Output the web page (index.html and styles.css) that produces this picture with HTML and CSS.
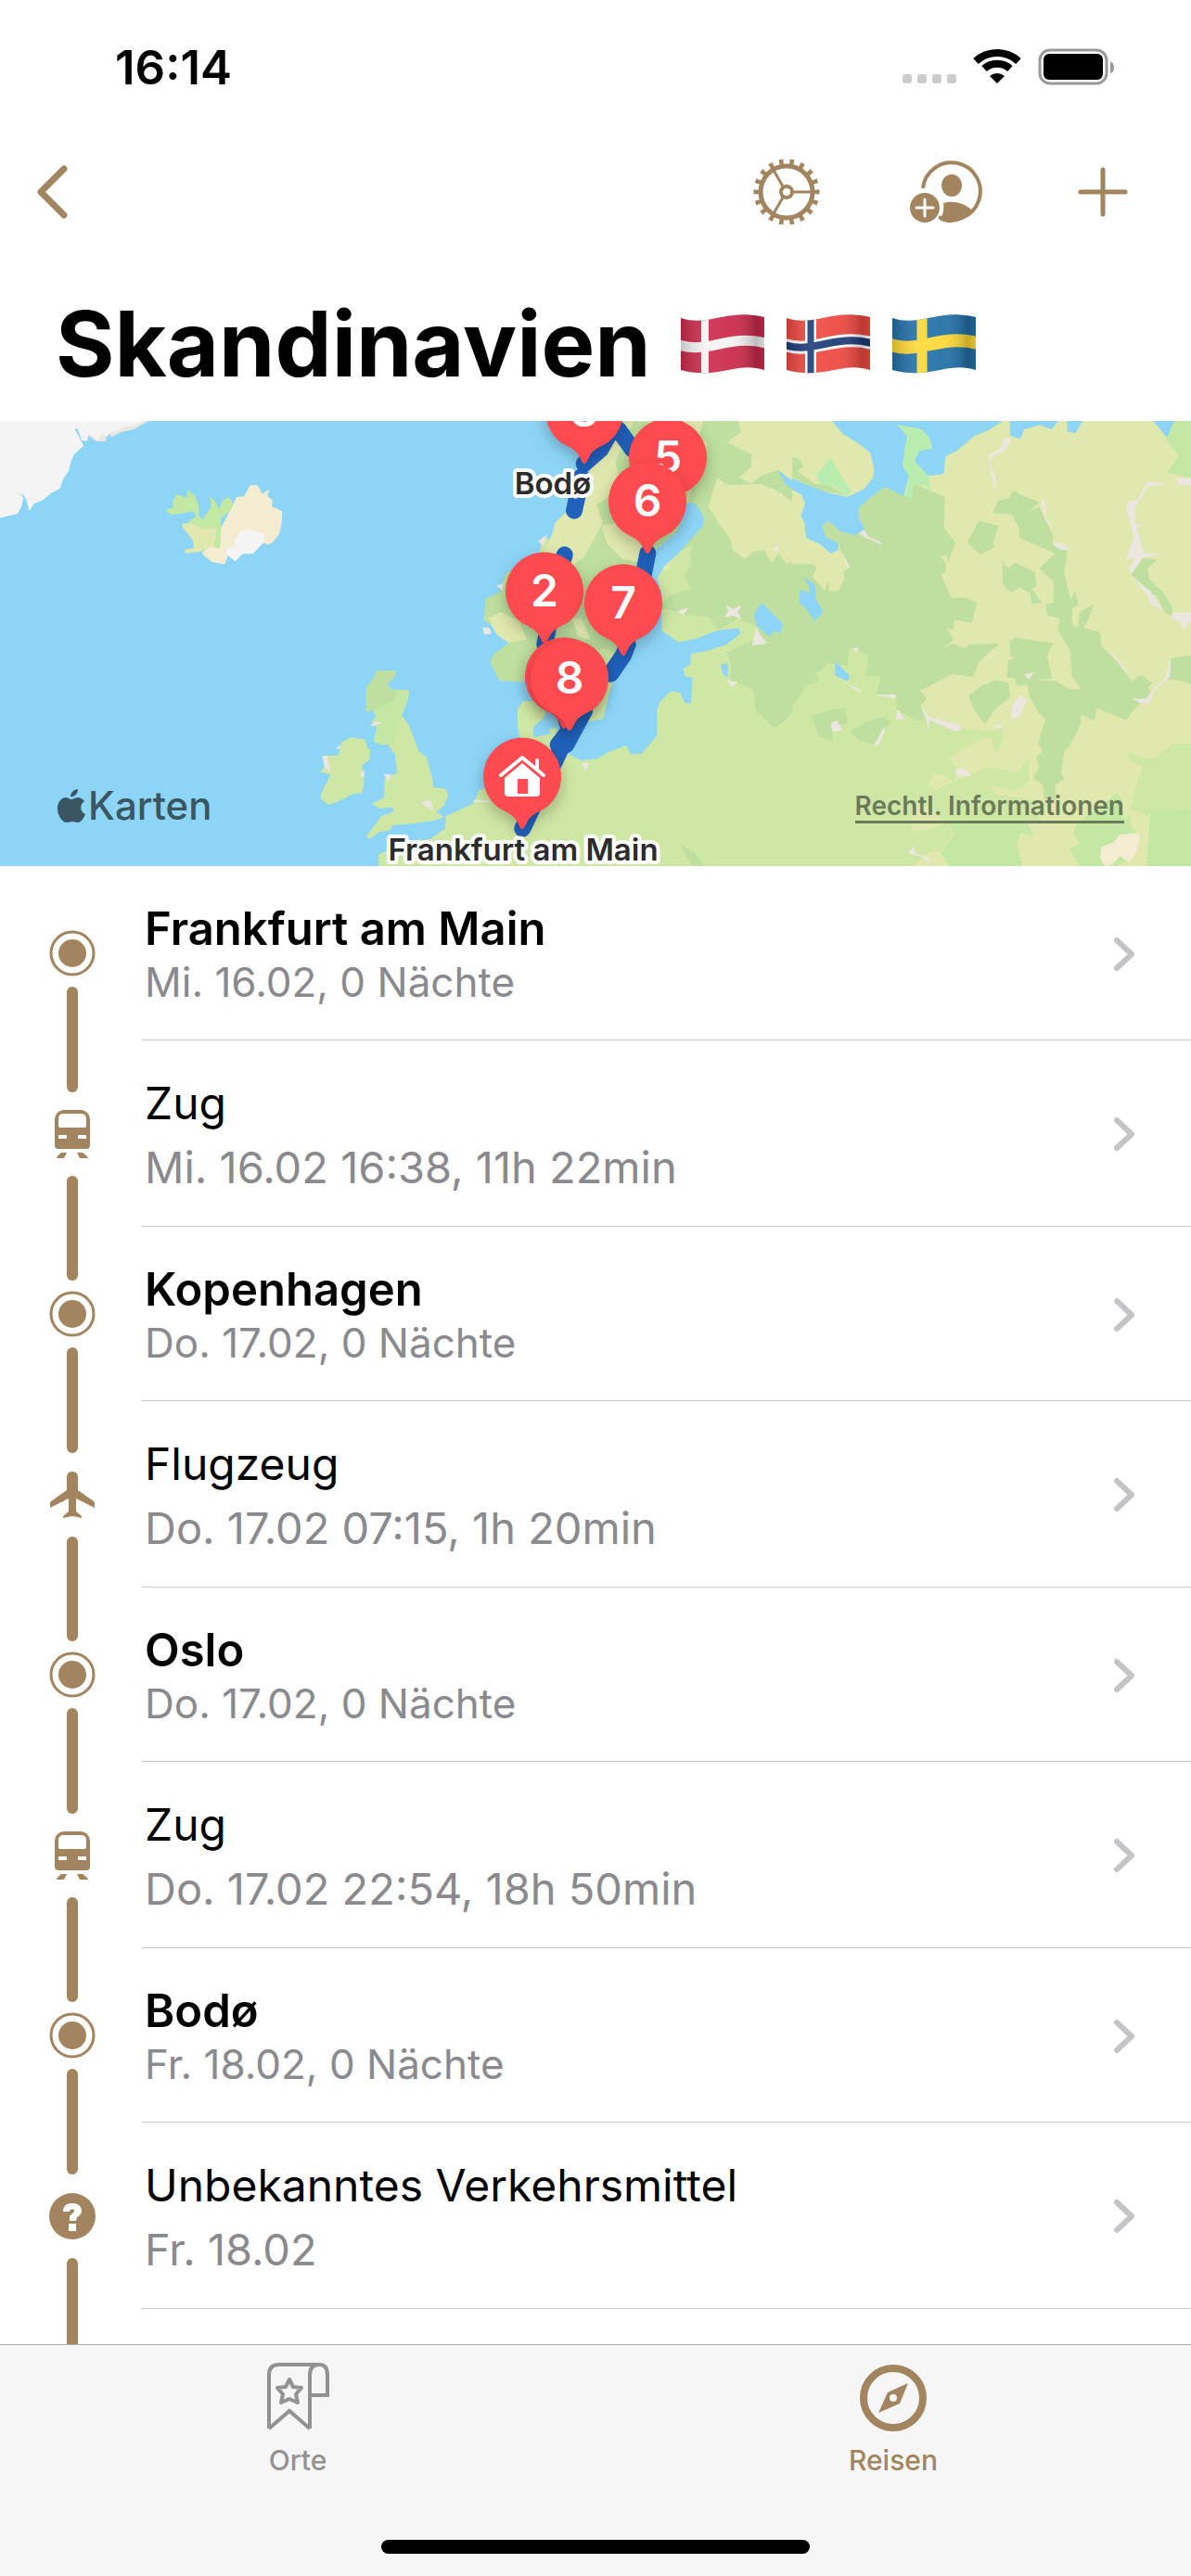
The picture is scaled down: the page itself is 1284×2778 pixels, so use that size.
FILE: index.html
```html
<!DOCTYPE html>
<html lang="de">
<head>
    <meta charset="UTF-8">
    <meta name="viewport" content="width=device-width, initial-scale=1.0">
    <title>Skandinavien</title>
    <link rel="stylesheet" href="styles.css">
</head>
<body>
    <!-- shared icons -->
    <svg class="sprite" aria-hidden="true">
        <symbol id="icon-place" viewBox="0 0 50 50">
            <circle cx="25" cy="25" r="23" fill="none" stroke="currentColor" stroke-width="3"/>
            <circle cx="25" cy="25" r="15" fill="currentColor"/>
        </symbol>
        <symbol id="icon-train" viewBox="0 0 50 54">
            <path fill="currentColor" fill-rule="evenodd" d="M16 1h18a10 10 0 0 1 10 10v28a4 4 0 0 1-4 4H10a4 4 0 0 1-4-4V11A10 10 0 0 1 16 1zM15 5a5 5 0 0 0-5 5v8a2 2 0 0 0 2 2h26a2 2 0 0 0 2-2v-8a5 5 0 0 0-5-5zM11 28a1 1 0 0 0-1 1v3h9v-3a1 1 0 0 0-1-1zM32 28a1 1 0 0 0-1 1v3h9v-3a1 1 0 0 0-1-1z"/>
            <path fill="currentColor" d="M13 47h6l-3 6H8q0-2 5-6zM30 47h6q6 4 6 6h-9z"/>
        </symbol>
        <symbol id="icon-plane" viewBox="0 0 50 54">
            <path fill="currentColor" d="M25 2q6 0 6 6v14l17 12q1 1 1 2v5L29 31v14l5 4q1 1 1 3l-10-2-10 2q0-2 1-3l5-4V31L1 41v-5q0-1 1-2l17-12V8q0-6 6-6z"/>
        </symbol>
        <symbol id="icon-unknown" viewBox="0 0 50 50">
            <circle cx="25" cy="25" r="25" fill="currentColor"/>
            <path fill="#fff" d="M15 20c0-6 4-9 10-9s10 3 10 8c0 4-3 6-5 7l-1 4h-7v-4c0-3 5-4 5-7 0-2-5-2-5 1zM21 33h8v8h-8z"/>
        </symbol>
        <symbol id="icon-chevron" viewBox="0 0 24 38">
            <path d="M4 4l16 15L4 34" fill="none" stroke="currentColor" stroke-width="6" stroke-linecap="round" stroke-linejoin="round"/>
        </symbol>
        <symbol id="pin" viewBox="-60 -60 120 130" overflow="visible">
            <path fill="#ff4b50" d="M0 57c-2 0-3-3-5-7C-9 42-16 39-24 35A42 42 0 1 1 24 35C16 39 9 42 5 50c-2 4-3 7-5 7z"/>
        </symbol>
        <clipPath id="flag-shape">
            <path d="M0 5C30 15 50-6 90 4V61C60 51 40 72 0 61z"/>
        </clipPath>
        <linearGradient id="flag-shade">
            <stop offset="0" stop-opacity=".18"/>
            <stop offset=".3" stop-color="#fff" stop-opacity=".1"/>
            <stop offset=".6" stop-color="#fff" stop-opacity=".06"/>
            <stop offset=".9" stop-opacity=".22"/>
            <stop offset="1" stop-opacity=".12"/>
        </linearGradient>
    </svg>

    <div class="app">
        <div class="status-bar">
            <span class="time">16:14</span>
            <div class="status-icons">
                <svg width="58" height="40" viewBox="0 0 58 40" fill="#ccc">
                    <rect x="0" y="28" width="10" height="10" rx="3"/>
                    <rect x="16" y="28" width="10" height="10" rx="3"/>
                    <rect x="32" y="28" width="10" height="10" rx="3"/>
                    <rect x="48" y="28" width="10" height="10" rx="3"/>
                </svg>
                <svg width="52" height="40" viewBox="0 0 52 40">
                    <path d="M3 14a34 34 0 0 1 46 0M12 22a21 21 0 0 1 28 0" fill="none" stroke="#000" stroke-width="8"/>
                    <path d="M26 38l-8-8a12 12 0 0 1 16 0z"/>
                </svg>
                <svg width="83" height="40" viewBox="0 0 83 40">
                    <rect x="2" y="2" width="72" height="36" rx="11" fill="none" stroke="#999" stroke-width="3"/>
                    <rect x="6" y="6" width="64" height="28" rx="6"/>
                    <path d="M78 14q4 2 4 7t-4 6z" fill="#999"/>
                </svg>
            </div>
        </div>

        <nav class="nav-bar">
            <button class="back" aria-label="Zurück">
                <svg width="34" height="58" viewBox="0 0 34 58"><path d="M30 4L5 29l25 25" fill="none" stroke="currentColor" stroke-width="7" stroke-linecap="round" stroke-linejoin="round"/></svg>
            </button>
            <div class="actions">
                <button aria-label="Einstellungen">
                    <svg width="74" height="74" viewBox="-37 -37 74 74" fill="none" stroke="currentColor">
                        <circle r="28" stroke-width="5"/>
                        <circle r="32" stroke-width="7" pathLength="180" stroke-dasharray="4 6" stroke-dashoffset="2"/>
                        <circle r="6" stroke-width="4"/>
                        <path d="M7 0h21M-4-6l-11-19M-4 6l-11 19" stroke-width="3"/>
                    </svg>
                </button>
                <button aria-label="Person hinzufügen">
                    <svg width="80" height="70" viewBox="0 0 80 70">
                        <path d="M14 31a31 31 0 1 1 17 31" fill="none" stroke="currentColor" stroke-width="4"/>
                        <ellipse cx="45" cy="28" rx="11" ry="12" fill="currentColor"/>
                        <path fill="currentColor" d="M36 47c9-3 22-1 30 7-8 14-24 17-34 11 4-6 5-12 4-18z"/>
                        <circle cx="16" cy="52" r="16" fill="currentColor"/>
                        <path d="M7 52h18M16 43v18" stroke="#fff" stroke-width="3" stroke-linecap="round"/>
                    </svg>
                </button>
                <button aria-label="Hinzufügen">
                    <svg width="64" height="64" viewBox="0 0 64 64"><path d="M8 32h48M32 8v48" stroke="currentColor" stroke-width="5" stroke-linecap="round"/></svg>
                </button>
            </div>
        </nav>

        <header class="trip-title">
            <h1>Skandinavien</h1>
            <svg class="flag" viewBox="0 0 90 66" role="img" aria-label="Dänemark">
                <g clip-path="url(#flag-shape)">
                    <path fill="#cb2a4b" d="M0 0h90v66H0z"/>
                    <path d="M26-5V70" stroke="#f2f2f2" stroke-width="8"/>
                    <path d="M-2 34C30 44 50 22 92 32" fill="none" stroke="#f2f2f2" stroke-width="11"/>
                    <path fill="url(#flag-shade)" d="M0 0h90v66H0z"/>
                </g>
            </svg>
            <svg class="flag" viewBox="0 0 90 66" role="img" aria-label="Norwegen">
                <g clip-path="url(#flag-shape)">
                    <path fill="#ee4840" d="M0 0h90v66H0z"/>
                    <path d="M26-5V70" stroke="#fff" stroke-width="12"/>
                    <path d="M-2 34C30 44 50 22 92 32" fill="none" stroke="#fff" stroke-width="14"/>
                    <path d="M26-5V70" stroke="#1e3c78" stroke-width="7"/>
                    <path d="M-2 34C30 44 50 22 92 32" fill="none" stroke="#1e3c78" stroke-width="8"/>
                    <path fill="url(#flag-shade)" d="M0 0h90v66H0z"/>
                </g>
            </svg>
            <svg class="flag" viewBox="0 0 90 66" role="img" aria-label="Schweden">
                <g clip-path="url(#flag-shape)">
                    <path fill="#2270a8" d="M0 0h90v66H0z"/>
                    <path d="M32-5V70" stroke="#fdd835" stroke-width="11"/>
                    <path d="M-2 34C30 44 50 22 92 32" fill="none" stroke="#fdd835" stroke-width="14"/>
                    <path fill="url(#flag-shade)" d="M0 0h90v66H0z"/>
                </g>
            </svg>
        </header>

        <section class="map">
            <svg class="map-canvas" viewBox="0 0 1284 480" preserveAspectRatio="xMidYMid slice">
                <!-- terrain, drawn at three times the map scale -->
                <svg width="1284" height="480" viewBox="0 12 3852 1440">
                    <!-- Greenland, Iceland -->
                    <path fill="#ebe6df" d="M285 60l28 18h28l8-30 12 16 30-16 40-8 40-22 8-8H285zM50 270l20-35 4 40zM92 260l6 40 8-30zM150 240l36-20 14-30v22l-22 28z"/>
                    <path fill="#f4f4f4" d="M0 12h470l-25 10-25 8-22 0-18 12-22 6-12 14-18-8-10 20-32-22-3 24h-18l-15-40-8 4 14 24 14 28-30 28-10 22-8 32-18 26-10 30-30 16-25 22-30 12-14 24-10-38-10-16-16-4 16 14-4 26-14 26-58 14z"/>
                    <path fill="#f4ecd0" d="M755 280l10-22 24-2 20-36 24 0 16 28 22-16-6 22 16 14-2 20 34 16-2 40-8 34-22 28-16 6-32-14-32 32-64 16-10 30-42-8-32-28 50-60z"/>
                    <path fill="#c2e8a3" d="M535 300l24-8 0-22 12-22 32 14 4-26 24 18 12 32 0 30 10 16 30-42-4-34 16 14 14 28 10-28 22-14 12 24-2 14-36 34-2 84-6 16-16-10 6-44-34 0-32-22-28-8 30-24-8-16-42 8-28 4z"/>
                    <path fill="#e0e8ae" d="M590 344l34 0 30 18 46-6-8 58-42 20-52 6 0-12 28-4 0-22-22-30-14-14z"/>
                    <path fill="#f4f4f4" d="M758 400l22-32 30-6 10 8 34 6 0 28-36 38h-34l-22 24-30-22 0-14 30-14z"/>
                    <!-- Ireland, Great Britain -->
                    <path fill="#cfe7a5" d="M1136 1036l44 6 8 26 10 10-2 28-24 20 0 22 6 28-6 38-34 6-46 24-30 10-26-24 8-24 26-50-34-8 14-20-6-32 50-2 6-20 4-22z"/>
                    <path fill="#ebe6df" d="M1042 1100l16-8 6 26 6 32-18-14zM1162 1158l16-18v26zM1086 1072l14-12v14z"/>
                    <path fill="#cfe7a5" d="M1264 960l40 10 20 30 30 80 26 20 16 60 6 36 40 6 8 24-14 30-24 22 26 16-40 12-60 8-70 6-6 16-36 6-30 22-12-8 50-66 40-14-4-14-40 4-28-16 40-20 2-60 40-20-6-60-20-24z"/>
                    <path fill="#c2e8a3" d="M1200 940l80-58 44 0-4 30-30 80-20 66-36 2-26-10 10-46-16-18 14-20z"/>
                    <path fill="#bedf9f" d="M1215 820l66 0-4 20-26 26 28 20-2 26-44 26-50 16 2-80 18-24 10-16z"/>
                    <path fill="#ebe6df" d="M1240 1154l26 2-10 22zM1196 998l18-14 24 4-28 10zM1364 1244l30-6 8 34-28-14z"/>

                    <g transform="translate(1290 0)">
                        <!-- continent -->
                        <path fill="#cfe7a5" d="M-65 1452L-65 1414-25 1395 0 1370 100 1366 150 1330 152 1290 240 1250 260 1205 290 1200 400 1120 400 1060 548 1060 600 1000 760 1000V600H2600V1452z"/>
                        <path fill="#cfe7a5" d="M390 1035l-6-40 0-50 16-26 70 0 6 46-40 36 0 34 50-10 60 20 0 90-60 10-60-40z"/>
                        <!-- Finland, Russia -->
                        <path fill="#bedf9f" d="M745 12L745 240 960 280 985 320 985 350 940 400 905 440 850 610 870 690 1035 690 1095 650 1165 680 1150 720 1060 760 1075 800 1070 850 1145 880 1155 950 1215 1005 1250 980 1290 930V12z"/>
                        <path fill="#e0e8ae" d="M985 12L970 60 1000 90 960 110 940 60 900 12zM1100 12L1105 50 1060 80 1140 120 1140 160 1100 195 1140 215 1170 190 1225 170 1260 210 1290 240V12z"/>
                        <path fill="#e0e8ae" d="M1030 195L1060 220 1170 215 1230 240 1290 290V470L1250 470 1230 440 1205 470 1180 430 1145 435 1120 460 1080 430 1070 390 1040 350 1000 290z"/>
                        <path fill="#cfe7a5" d="M835 515L900 440 950 410 940 440 945 480 922 510 945 555 880 575 850 600 850 620 870 620 930 640 1000 645 1038 690 900 730 845 690z"/>
                        <!-- Scandinavia -->
                        <path fill="#e0e8ae" d="M720 12l-40 90-80 90-25 80-70 70-10 40-35 60-60 130-60 60-45 40 120 60 90-120 160-110 210-10 70-250-10-230z"/>
                        <path fill="#bedf9f" d="M760 12l-60 130 20 90-80 50 20 60-50 90-10 20-35 25-20 70-120-90-80 50-20 60-45 20-5 70 15 10 55 20 30 30-70 50-10 25 30 60 75 5 60-60 40 20 40 80 20 60 40 30 80-18 35-120 55-160 60-200 110-100-20-100-90-120 20-150z"/>
                        <path fill="#cfe7a5" d="M470 760l200-10 40 20-20 80-14 60-16 70-60 10-60-20z"/>
                        <path fill="#e0e8ae" d="M655 350l60-10 60 60 20 30-10 40-60-10-50-50zM290 650l40-20 60 30 24 60-60 10-40-30zM560 650l30 0 30 70-40-10z"/>
                        <path fill="#cfe7a5" d="M470 385l15 10-20 60-20 10zM486 1010l24-8 4 34-22-8z"/>
                        <!-- Baltic Sea -->
                        <path fill="#8dd5f6" d="M700 830L755 790 765 740 760 620 780 500 830 430 900 370 930 280 960 280 985 320 985 350 945 375 905 440 860 480 835 520 850 570 850 690 905 728 965 715 1030 690 1100 682 1105 700 1060 735 1000 755 945 765 943 800 920 812 925 838 950 842 945 925 925 925 910 892 880 885 845 920 835 945 835 1030 785 1088 750 1090 735 1062 680 1082 640 1105 590 1110 548 1090 540 1060 600 990 635 980 660 975 680 900z"/>
                        <path fill="#8dd5f6" d="M1148 640l26-40 40 40 30 30-12 30-18-10-14 20-42-34zM1225 170l66 50v26l-40-30zM1040 800l24-4 0 46-14-8z"/>
                        <path fill="#ebe6df" d="M1056 606l26 14 28-14-14 24 12 24-28-12-28 6 14-20zM1156 680l14 26 22 26-50 6zM900 628l36-12-14 22zM1060 850l36 8-20 16zM590 1116l24 4-8 26zM242 1238l50 2 6 6-56 0zM1208 430l16-18 4 22zM270 680l22 0 8 20-22 4zM315 545l24-8-4 24zM450 400l30-20-14 36z"/>
                        <path fill="#bedf9f" d="M904 1376l60 40 26 36h-40z"/>
                    </g>

                    <g transform="translate(2562 0)">
                        <path fill="#e0e8ae" d="M0 12H1290V1452H380L400 1000 0 480z"/>
                        <path fill="#bedf9f" d="M0 475L70 475 80 490 65 515 105 560 115 530 120 560 150 562 170 520 165 500 185 485 155 430 150 400 155 370 205 382 235 360 215 325 215 295 250 262 300 225 360 255 400 215 440 235 495 258 490 355 527 405 505 470 500 445 480 450 498 475 495 505 480 505 495 540 515 585 560 583 598 600 580 665 525 655 520 690 500 680 522 720 490 745 520 732 560 748 570 735 670 732 605 790 585 840 520 830 415 885 435 910 415 935 440 975 400 982 340 945 330 920 0 940zM0 130L25 135 35 160 15 175 75 215 120 220 170 250 100 240 30 210 0 195z"/>
                        <path fill="#cfe7a5" d="M0 935L45 870 90 850 75 830 120 795 180 805 180 760 200 745 245 770 245 810 235 835 285 840 280 870 270 895 335 900 340 950 400 985 440 970 540 1005 640 1015 680 1005 685 1045 660 1085 640 1035 560 1065 510 1105 540 1150 520 1180 500 1160 455 1155 445 1190 470 1215 400 1250 360 1320 395 1340 440 1335 495 1310 520 1350 480 1400 440 1410 390 1452H0z"/>
                        <path fill="#cfe7a5" d="M520 1180L640 1130 730 1150 765 1100 765 1180 720 1210 640 1190 660 1220 800 1240 800 1310 500 1310 400 1240zM1085 1080L1130 1100 1170 1105 1230 1055 1290 1055V1270L1160 1275 1150 1290 1095 1270 1115 1180 1135 1130 1090 1110z"/>
                        <path fill="#bedf9f" d="M648 310L665 270 700 262 715 238 750 255 800 275 765 305 800 290 845 385 840 405 890 430 880 500 900 590 915 562 925 605 905 620 905 670 925 680 930 630 975 605 960 650 940 680 995 695 1000 740 1050 790 1100 855 1130 832 1165 860 1150 875 1165 895 1100 950 1080 980 985 940 978 982 930 960 935 990 900 1060 880 1080 870 1150 880 1170 850 1190 850 1240 815 1235 810 1190 780 1165 800 1130 790 1100 810 1080 795 1055 820 975 800 960 765 900 760 865 730 870 720 845 695 840 700 785 720 780 705 770 705 725 720 712 800 725 845 730 825 770 840 845 780 850 850 852 900 880 935 880 905 840 900 755 860 690 865 650 825 640 820 605 845 600 845 530 800 490 850 440 735 390 735 360 710 315z"/>
                        <path fill="#bedf9f" d="M570 900L610 870 660 850 700 860 705 905 655 945 625 992 590 950zM570 395L605 335 668 352 650 400 655 420 610 445 570 410zM680 465L700 490 720 470 785 500 790 545 775 555 808 600 775 605 770 570 735 550 710 568 680 540z"/>
                        <path fill="#bedf9f" d="M1096 510L1130 455 1180 460 1150 490 1155 525 1195 560 1230 615 1230 645 1205 630 1180 580 1120 540zM1225 780L1255 775 1290 770V865L1250 850 1215 850zM64 965L130 945 170 940 180 990 135 1000 130 1050 85 1030zM186 1015L250 980 300 970 320 985 260 1060 215 1045z"/>
                        <path fill="#c2e8a3" d="M500 1310H760L782 1355 740 1345 725 1380 745 1452H510L480 1410 525 1350zM920 1315L1050 1217 1070 1240 1070 1300 1095 1290 1090 1320 1115 1345 1110 1420 1050 1452H930L895 1395 930 1380 910 1350zM1160 1270H1290V1452H1145zM1236 12H1290V195L1210 180 1250 125 1210 70z"/>
                        <path fill="#f4ecd0" d="M1000 1390L1040 1375 1060 1350 1120 1345 1125 1365 1110 1420 1090 1440 1060 1420 1030 1450 1010 1452 995 1425z"/>
                        <!-- White Sea -->
                        <path fill="#8dd5f6" d="M128 12L165 55 215 85 252 115 265 165 262 195 235 230 180 257 120 245 40 215 0 197V235L30 250 42 280 28 320 40 340 45 390 90 410 125 440 150 430 150 405 110 390 98 350 120 337 155 370 205 382 235 360 215 325 215 295 250 262 300 225 360 255 378 190 357 155 372 60 342 25 420 40 445 70 452 100 410 110 395 140 440 190 490 183 497 125 530 110 590 60 640 40 680 12 704 12 705 60 738 70 750 40 800 25 840 40 860 12z"/>
                        <path fill="#8dd5f6" d="M890 12h50l-24 40-26-6zM1168 12h68l-24 54zM34 516l40 24 4 50 22 40-26 30-28-40-22-20 0-40 14 0 20 10-4-26zM140 790l46 46-6 18-42-20z"/>
                        <path fill="#bedf9f" d="M98 350L120 337 155 370 150 405 110 390z"/>
                        <path fill="#b9edb0" d="M342 25L420 40 445 70 452 100 410 110 395 140 440 190 450 240 430 220 390 220 390 260 365 258 378 190 357 155 372 60zM78 185L125 132 150 175 192 240 175 258 140 225 90 215z"/>
                        <path fill="#ebe6df" d="M685 70L715 65 690 105 645 130 640 155 658 190 658 240 635 150 640 120 675 100zM1080 290L1090 270 1115 268 1150 208 1210 215 1150 225 1110 290 1110 345 1128 350 1115 360 1138 440 1200 440 1135 455 1096 508 1090 490 1105 460 1080 460 1105 390zM1096 510L1160 565 1202 628 1160 605 1150 575zM1228 632H1290V655L1265 690 1255 660 1228 655zM1240 196l50 2v22l-40-2zM740 900L760 915 735 970 710 978 712 930zM126 990l20-10 14 30-30 10zM340 945l26 30-30 5zM265 1060L298 1000 300 1015 280 1060zM376 1410L392 1388 398 1410 440 1425 450 1452 425 1425zM520 1000l20-10 6 20-16 6zM530 1140L555 1135 582 1160 530 1160zM195 748L215 745 210 762zM848 405L870 408 905 430 870 428 845 415zM805 255L822 290 820 320 843 362 820 335 808 290zM1010 740L1060 790 1105 855 1060 800zM1100 910L1145 910 1168 880 1205 845 1225 770 1222 840 1170 885 1155 930 1125 925zM650 1005L685 985 675 1005zM750 832L782 825 765 848zM415 935L445 970 520 990 540 1005 525 1015 445 980 438 1020 436 985zM160 850L218 890 260 855 225 885zM270 897H335V910zM155 425L188 485 180 488zM215 375L235 365 245 385 288 405 280 440 285 410 240 390z"/>
                    </g>

                    <!-- route -->
                    <g transform="translate(1290 0)" fill="none" stroke="#2162bd" stroke-width="54" stroke-linecap="round">
                        <path d="M400 1331l120-251 32-70-20-60M515 1060L600 950M600 950l-60 110M685 830L726 770 740 735M472 735l10-50M536 445l-40 120M567 302l24-110M599 150l53-46 40-70M710 40l46 64M805 440l-18 90"/>
                    </g>
                </svg>

                <g class="pins">
                    <g transform="translate(630 -11)"><use href="#pin" x="-60" y="-60" width="120" height="130"/><text y="17">3</text></g>
                    <g class="map-label"><text x="596" y="79">Bodø</text></g>
                    <g transform="translate(720 39)"><use href="#pin" x="-60" y="-60" width="120" height="130"/><text y="17">5</text></g>
                    <g transform="translate(698 86)"><use href="#pin" x="-60" y="-60" width="120" height="130"/><text y="17">6</text></g>
                    <g transform="translate(587 183)"><use href="#pin" x="-60" y="-60" width="120" height="130"/><text y="17">2</text></g>
                    <g transform="translate(672 196)"><use href="#pin" x="-60" y="-60" width="120" height="130"/><text y="17">7</text></g>
                    <g transform="translate(608 275)"><use href="#pin" x="-60" y="-60" width="120" height="130"/></g>
                    <g transform="translate(614 277)"><use href="#pin" x="-60" y="-60" width="120" height="130"/><text y="17">8</text></g>
                    <g transform="translate(563 383)">
                        <use href="#pin" x="-60" y="-60" width="120" height="130"/>
                        <path d="M-23-1L0-20 23-1M16-17v9" fill="none" stroke="#fff" stroke-width="4" stroke-linecap="round" stroke-linejoin="round"/>
                        <path fill="#fff" fill-rule="evenodd" d="M0-14L19 2v16q0 4-4 4h-30q-4 0-4-4V2zM-5 3v16H6V3z"/>
                    </g>
                </g>
                <g class="map-label"><text x="564" y="474">Frankfurt am Main</text></g>
            </svg>
            <div class="map-brand">
                <svg width="30" height="37" viewBox="0 0 30 37" fill="currentColor">
                    <path d="M22 0c0 5-4 9-8 8 0-4 4-8 8-8zM15 11c2 0 4-2 7-2 2 0 5 1 7 4-6 4-4 12 1 14-2 5-5 9-8 9-2 0-4-1-6-1s-4 1-6 1C5 36 0 28 0 21 0 14 4 9 9 9c2 0 4 2 6 2z"/>
                </svg>
                <span>Karten</span>
            </div>
            <a class="map-legal" href="#">Rechtl. Informationen</a>
        </section>

        <ul class="stops">
            <li class="stop place first">
                <div class="rail"><svg width="50" height="50"><use href="#icon-place"/></svg></div>
                <a class="stop-body" href="#">
                    <div class="stop-text"><h2>Frankfurt am Main</h2><p>Mi. 16.02, 0 Nächte</p></div>
                    <svg class="chevron"><use href="#icon-chevron"/></svg>
                </a>
            </li>
            <li class="stop transport">
                <div class="rail"><svg width="50" height="54"><use href="#icon-train"/></svg></div>
                <a class="stop-body" href="#">
                    <div class="stop-text"><h2>Zug</h2><p>Mi. 16.02 16:38, 11h 22min</p></div>
                    <svg class="chevron"><use href="#icon-chevron"/></svg>
                </a>
            </li>
            <li class="stop place">
                <div class="rail"><svg width="50" height="50"><use href="#icon-place"/></svg></div>
                <a class="stop-body" href="#">
                    <div class="stop-text"><h2>Kopenhagen</h2><p>Do. 17.02, 0 Nächte</p></div>
                    <svg class="chevron"><use href="#icon-chevron"/></svg>
                </a>
            </li>
            <li class="stop transport">
                <div class="rail"><svg width="50" height="54"><use href="#icon-plane"/></svg></div>
                <a class="stop-body" href="#">
                    <div class="stop-text"><h2>Flugzeug</h2><p>Do. 17.02 07:15, 1h 20min</p></div>
                    <svg class="chevron"><use href="#icon-chevron"/></svg>
                </a>
            </li>
            <li class="stop place">
                <div class="rail"><svg width="50" height="50"><use href="#icon-place"/></svg></div>
                <a class="stop-body" href="#">
                    <div class="stop-text"><h2>Oslo</h2><p>Do. 17.02, 0 Nächte</p></div>
                    <svg class="chevron"><use href="#icon-chevron"/></svg>
                </a>
            </li>
            <li class="stop transport">
                <div class="rail"><svg width="50" height="54"><use href="#icon-train"/></svg></div>
                <a class="stop-body" href="#">
                    <div class="stop-text"><h2>Zug</h2><p>Do. 17.02 22:54, 18h 50min</p></div>
                    <svg class="chevron"><use href="#icon-chevron"/></svg>
                </a>
            </li>
            <li class="stop place">
                <div class="rail"><svg width="50" height="50"><use href="#icon-place"/></svg></div>
                <a class="stop-body" href="#">
                    <div class="stop-text"><h2>Bodø</h2><p>Fr. 18.02, 0 Nächte</p></div>
                    <svg class="chevron"><use href="#icon-chevron"/></svg>
                </a>
            </li>
            <li class="stop transport">
                <div class="rail"><svg width="50" height="54"><use href="#icon-unknown"/></svg></div>
                <a class="stop-body" href="#">
                    <div class="stop-text"><h2>Unbekanntes Verkehrsmittel</h2><p>Fr. 18.02</p></div>
                    <svg class="chevron"><use href="#icon-chevron"/></svg>
                </a>
            </li>
            <li class="stop more"><div class="rail"></div></li>
        </ul>

        <footer class="tab-bar">
            <div class="tabs">
                <a class="tab" href="#">
                    <svg width="76" height="76" viewBox="0 0 76 76" fill="none" stroke="currentColor" stroke-width="4">
                        <path d="M7 72V14Q7 3 18 3h43q9 0 9 11v22H51M51 72V14q0-10 9-11M7 72l22-19 22 19"/>
                        <path d="M29 19l4 8 9 1-6 7 2 9-9-4-9 4 2-9-6-7 9-1z" stroke-linejoin="round"/>
                    </svg>
                    Orte
                </a>
                <a class="tab active" href="#">
                    <svg width="76" height="76" viewBox="0 0 76 76">
                        <circle cx="38" cy="39" r="32" fill="none" stroke="currentColor" stroke-width="8"/>
                        <path fill="currentColor" fill-rule="evenodd" d="M54 23L45 45 22 55 32 33zM38 35a4 4 0 1 0 0 8 4 4 0 0 0 0-8z"/>
                    </svg>
                    Reisen
                </a>
            </div>
            <div class="home-indicator"></div>
        </footer>
    </div>
</body>
</html>
```
FILE: styles.css
```css
* {
    box-sizing: border-box;
}

body {
    font-family: Inter, "Liberation Sans", sans-serif;
    margin: 0;
    padding: 0;
    background-color: #fff;
    color: #000;
}

h1, h2, p, ul {
    margin: 0;
    padding: 0;
}

a {
    color: inherit;
    text-decoration: none;
}

button {
    display: flex;
    padding: 0;
    border: 0;
    background: none;
    color: #a2845e;
    cursor: pointer;
}

svg {
    display: block;
    flex-shrink: 0;
}

.sprite {
    position: absolute;
    width: 0;
    height: 0;
}

.app {
    display: flex;
    flex-direction: column;
    height: 100vh;
    overflow: hidden;
}

/* top bars */
.status-bar {
    display: flex;
    justify-content: space-between;
    align-items: center;
    height: 144px;
    padding: 0 82px 0 124px;
}

.time {
    font-size: 51px;
    font-weight: 600;
}

.status-icons {
    display: flex;
    gap: 18px;
}

.nav-bar {
    display: flex;
    justify-content: space-between;
    align-items: center;
    height: 126px;
    padding: 0 63px 0 39px;
}

.actions {
    display: flex;
    align-items: center;
    gap: 96px;
}

.trip-title {
    display: flex;
    align-items: center;
    gap: 24px;
    height: 184px;
    padding: 18px 60px 0;
}

h1 {
    font-size: 97px;
    font-weight: 700;
    line-height: 120px;
    margin-right: 8px;
}

.flag {
    width: 90px;
    height: 66px;
}

/* map */
.map {
    position: relative;
    height: 480px;
    flex-shrink: 0;
    background-color: #8dd5f6;
    overflow: hidden;
}

.map-canvas {
    width: 100%;
    height: 100%;
}

.pins text {
    font-size: 48px;
    font-weight: 600;
    fill: #fff;
    text-anchor: middle;
}

.pins use {
    filter: drop-shadow(0 6px 8px rgba(0, 0, 0, 0.25));
}

.map-label text {
    font-size: 33px;
    font-weight: 600;
    fill: #2c2c2c;
    stroke: #fff;
    stroke-width: 8px;
    stroke-linejoin: round;
    paint-order: stroke;
    text-anchor: middle;
}

.map-brand {
    position: absolute;
    left: 62px;
    bottom: 37px;
    display: flex;
    align-items: center;
    gap: 3px;
    color: #3a5663;
    font-size: 42px;
    font-weight: 500;
    line-height: 56px;
}

.map-legal {
    position: absolute;
    right: 72px;
    bottom: 46px;
    border-bottom: 3px solid #6b7a58;
    color: #6b7a58;
    font-size: 28px;
    font-weight: 600;
    line-height: 32px;
}

/* list of stops */
.stops {
    flex: 1;
    min-height: 0;
    overflow: hidden;
    list-style: none;
}

.stop {
    display: flex;
    height: 188px;
}

.transport {
    height: 201px;
}

.rail {
    display: flex;
    flex-direction: column;
    align-items: center;
    gap: 11px;
    width: 153px;
    padding-left: 3px;
    color: #a2845e;
}

.transport .rail {
    gap: 18px;
}

.rail::before,
.rail::after {
    content: "";
    flex: 1;
    width: 12px;
    background-color: #a2845e;
}

.rail::before {
    border-radius: 0 0 6px 6px;
}

.rail::after {
    border-radius: 6px 6px 0 0;
}

.first .rail::before {
    background: none;
}

.more .rail {
    gap: 0;
}

.more .rail::before,
.more .rail::after {
    border-radius: 0;
}

.stop-body {
    display: flex;
    flex: 1;
    align-items: center;
    justify-content: space-between;
    padding: 2px 60px 0 3px;
    border-bottom: 1px solid #c6c6c8;
}

h2 {
    font-size: 48px;
    font-weight: 400;
    line-height: 60px;
}

.place h2 {
    font-size: 49px;
    font-weight: 600;
}

.stop p {
    color: #8a8a8e;
    font-size: 44px;
    line-height: 54px;
}

.transport p {
    margin-top: 12px;
    font-size: 47px;
}

.chevron {
    width: 24px;
    height: 38px;
    color: #c4c4c7;
}

/* bottom bar */
.tab-bar {
    display: flex;
    flex-direction: column;
    justify-content: space-between;
    align-items: center;
    flex-shrink: 0;
    height: 250px;
    padding: 18px 0 24px;
    border-top: 1px solid #a8a8aa;
    background-color: #f6f6f6;
}

.tabs {
    display: flex;
    width: 100%;
}

.tab {
    display: flex;
    flex: 1;
    flex-direction: column;
    align-items: center;
    gap: 12px;
    color: #929292;
    font-size: 30px;
    font-weight: 500;
    line-height: 36px;
}

.active {
    color: #a2845e;
}

.home-indicator {
    width: 36%;
    height: 15px;
    border-radius: 8px;
    background-color: #000;
}
```
